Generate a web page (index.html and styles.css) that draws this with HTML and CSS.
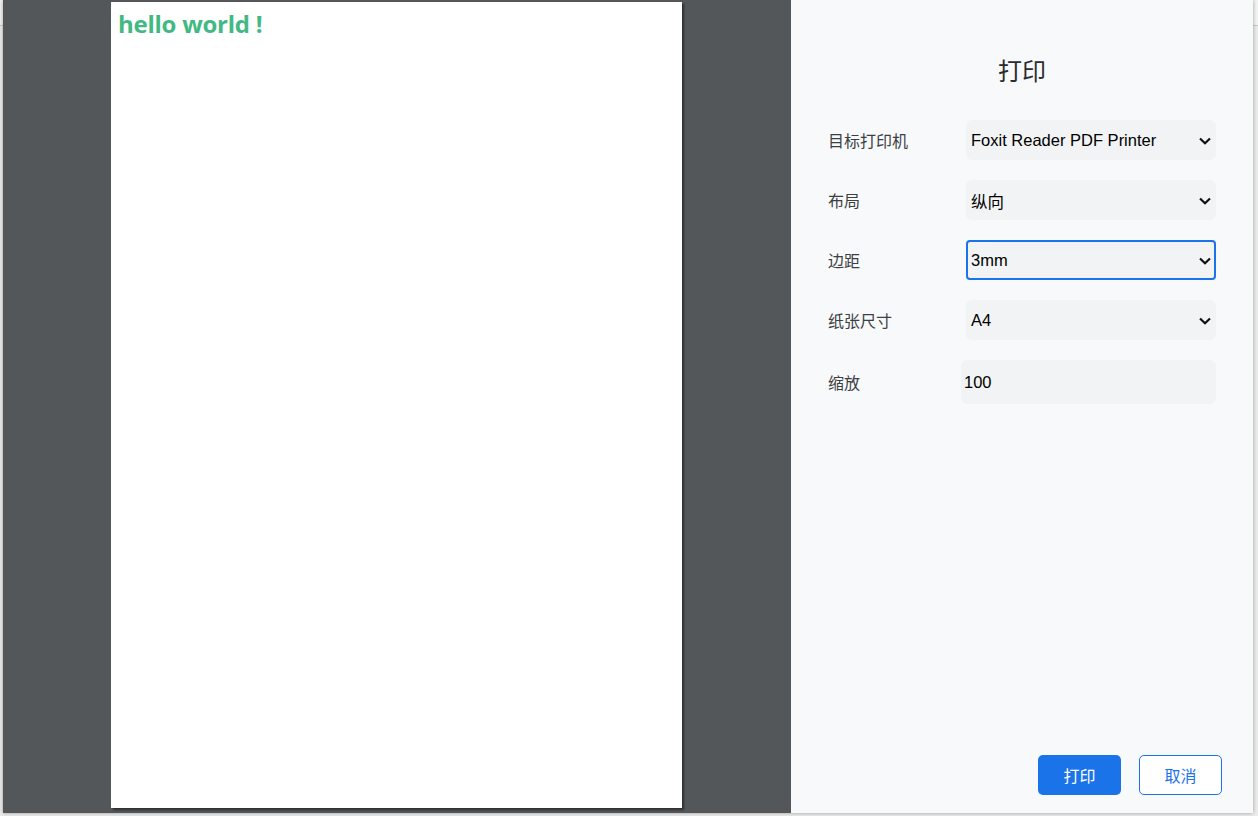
FILE: index.html
```html
<!DOCTYPE html>
<html lang="zh-CN">
<head>
    <meta charset="UTF-8">
    <meta name="viewport" content="width=device-width, initial-scale=1.0">
    <title>打印</title>
    <link rel="stylesheet" href="styles.css">
</head>
<body>
    <div class="dialog">
        <div class="preview">
            <div class="page">
                <h1 class="hello">hello world !</h1>
            </div>
        </div>

        <div class="panel">
            <h2 class="panel-title">打印</h2>

            <div class="form">
                <div class="row">
                    <span class="label">目标打印机</span>
                    <div class="select">
                        <span>Foxit Reader PDF Printer</span>
                        <svg class="chevron" viewBox="0 0 12 8" fill="none" stroke="currentColor" stroke-width="2.2">
                            <polyline points="1 1.5 6 6.2 11 1.5"></polyline>
                        </svg>
                    </div>
                </div>
                <div class="row">
                    <span class="label">布局</span>
                    <div class="select">
                        <span>纵向</span>
                        <svg class="chevron" viewBox="0 0 12 8" fill="none" stroke="currentColor" stroke-width="2.2">
                            <polyline points="1 1.5 6 6.2 11 1.5"></polyline>
                        </svg>
                    </div>
                </div>
                <div class="row">
                    <span class="label">边距</span>
                    <div class="select focused">
                        <span>3mm</span>
                        <svg class="chevron" viewBox="0 0 12 8" fill="none" stroke="currentColor" stroke-width="2.2">
                            <polyline points="1 1.5 6 6.2 11 1.5"></polyline>
                        </svg>
                    </div>
                </div>
                <div class="row">
                    <span class="label">纸张尺寸</span>
                    <div class="select">
                        <span>A4</span>
                        <svg class="chevron" viewBox="0 0 12 8" fill="none" stroke="currentColor" stroke-width="2.2">
                            <polyline points="1 1.5 6 6.2 11 1.5"></polyline>
                        </svg>
                    </div>
                </div>
                <div class="row">
                    <span class="label">缩放</span>
                    <input class="input" type="text" value="100">
                </div>
            </div>

            <div class="footer">
                <button class="btn btn-primary">打印</button>
                <button class="btn btn-outline">取消</button>
            </div>
        </div>
    </div>
</body>
</html>
```

FILE: styles.css
```css
:root {
    --preview-bg: #53575a;
    --panel-bg: #f8f9fa;
    --field-bg: #f1f3f4;
    --blue: #1a73e8;
    --text: #3c4043;
    --green: #42b983;
}

* {
    margin: 0;
    padding: 0;
    box-sizing: border-box;
}

body {
    font-family: "Liberation Sans", "Noto Sans CJK SC", sans-serif;
    background: linear-gradient(to bottom, #f3f3f3 0, #f3f3f3 25px, #c9c9c9 25px, #c9c9c9 26px, #ececec 26px);
    min-height: 100vh;
    overflow: hidden;
}

.dialog {
    display: flex;
    width: 1250px;
    height: 813px;
    margin-left: 3px;
    box-shadow: 0 0 4px rgba(0, 0, 0, 0.35);
}

.preview {
    width: 788px;
    background-color: var(--preview-bg);
    padding: 2px 0 0 108px;
}

.page {
    width: 571px;
    height: 806px;
    background-color: #fff;
    box-shadow: 2px 2px 2px rgba(0, 0, 0, 0.45);
}

.hello {
    font-family: "Open Sans", "Noto Sans", sans-serif;
    font-size: 24px;
    font-weight: bold;
    letter-spacing: -0.25px;
    color: var(--green);
    line-height: 32px;
    padding: 6px 0 0 7px;
}

.panel {
    flex: 1;
    background-color: var(--panel-bg);
    display: flex;
    flex-direction: column;
    padding: 0 37px;
}

.panel-title {
    font-family: "Noto Sans CJK SC", sans-serif;
    font-size: 24px;
    font-weight: normal;
    color: #2a2d30;
    text-align: center;
    line-height: 32px;
    margin-top: 54px;
}

.form {
    display: flex;
    flex-direction: column;
    gap: 20px;
    margin-top: 34px;
}

.row {
    display: flex;
    align-items: center;
    justify-content: space-between;
}

.label {
    font-family: "Noto Sans CJK SC", sans-serif;
    font-size: 16px;
    color: var(--text);
}

.select {
    width: 250px;
    height: 40px;
    background-color: var(--field-bg);
    border-radius: 6px;
    border: 2px solid transparent;
    display: flex;
    align-items: center;
    justify-content: space-between;
    padding: 1px 3px 0 3px;
    font-size: 16.5px;
    color: #000;
}

.select.focused {
    border-color: var(--blue);
    border-radius: 4px;
}

.chevron {
    width: 12px;
    height: 8px;
    color: #111;
}

.input {
    width: 255px;
    height: 44px;
    background-color: var(--field-bg);
    border: none;
    border-radius: 6px;
    padding: 0 3px;
    font-family: "Liberation Sans", sans-serif;
    font-size: 16.5px;
    color: #000;
    outline: none;
}

.footer {
    margin-top: auto;
    margin-right: -6px;
    margin-bottom: 18px;
    display: flex;
    justify-content: flex-end;
    gap: 18px;
}

.btn {
    width: 83px;
    height: 40px;
    border-radius: 5px;
    font-family: "Noto Sans CJK SC", sans-serif;
    font-size: 16px;
    cursor: pointer;
}

.btn-primary {
    background-color: var(--blue);
    border: none;
    color: #fff;
}

.btn-outline {
    background-color: #fff;
    border: 1px solid var(--blue);
    color: var(--blue);
}
```
